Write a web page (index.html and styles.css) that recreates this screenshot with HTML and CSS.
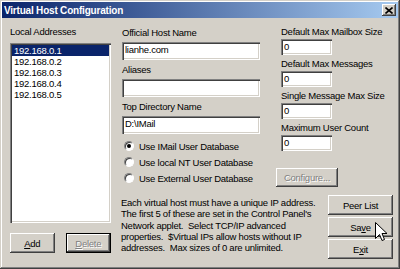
FILE: index.html
```html
<!DOCTYPE html>
<html lang="en">
<head>
    <meta charset="UTF-8">
    <title>Virtual Host Configuration</title>
    <link rel="stylesheet" href="styles.css">
</head>
<body>
    <div class="window">
        <div class="titlebar">
            <span class="title">Virtual Host Configuration</span>
            <span class="close-btn">
                <svg width="8" height="7" viewBox="0 0 8 7">
                    <path d="M0.5 0.5 L7.5 6.5 M7.5 0.5 L0.5 6.5" stroke="#000" stroke-width="1.6" fill="none"/>
                </svg>
            </span>
        </div>

        <div class="client">
            <!-- Coluna da lista de endereços -->
            <div class="col-left">
                <div class="label">Local Addresses</div>
                <ul class="listbox">
                    <li class="selected">192.168.0.1</li>
                    <li>192.168.0.2</li>
                    <li>192.168.0.3</li>
                    <li>192.168.0.4</li>
                    <li>192.168.0.5</li>
                </ul>
                <div class="list-buttons">
                    <div class="btn btn-add"><u>A</u>dd</div>
                    <div class="btn btn-delete default disabled"><span><u>D</u>elete</span></div>
                </div>
            </div>

            <div class="main">
                <div class="upper">
                    <div class="col-mid">
                        <div class="field">
                            <div class="label">Official Host Name</div>
                            <div class="textbox">lianhe.com</div>
                        </div>
                        <div class="field">
                            <div class="label">Aliases</div>
                            <div class="textbox"></div>
                        </div>
                        <div class="field">
                            <div class="label">Top Directory Name</div>
                            <div class="textbox">D:\IMail</div>
                        </div>
                        <div class="radios">
                            <div class="radio-row"><span class="radio checked"></span>Use IMail User Database</div>
                            <div class="radio-row"><span class="radio"></span>Use local NT User Database</div>
                            <div class="radio-row"><span class="radio"></span>Use External User Database</div>
                        </div>
                    </div>

                    <div class="col-right">
                        <div class="small-field">
                            <div class="label">Default Max Mailbox Size</div>
                            <div class="textbox small">0</div>
                        </div>
                        <div class="small-field">
                            <div class="label">Default Max Messages</div>
                            <div class="textbox small">0</div>
                        </div>
                        <div class="small-field">
                            <div class="label">Single Message Max Size</div>
                            <div class="textbox small">0</div>
                        </div>
                        <div class="small-field">
                            <div class="label">Maximum User Count</div>
                            <div class="textbox small">0</div>
                        </div>
                        <div class="btn btn-configure disabled">Configure...</div>
                    </div>
                </div>

                <div class="lower">
                    <p class="note">
                        Each virtual host must have a unique IP address.<br>
                        The first 5 of these are set in the Control Panel's<br>
                        Network applet.&nbsp; Select TCP/IP advanced<br>
                        properties.&nbsp; $Virtual IPs allow hosts without IP<br>
                        addresses.&nbsp; Max sizes of 0 are unlimited.
                    </p>
                    <div class="side-buttons">
                        <div class="btn btn-side">Peer List</div>
                        <div class="btn btn-side">Sa<u>v</u>e</div>
                        <div class="btn btn-side">E<u>x</u>it</div>
                    </div>
                </div>
            </div>
        </div>

        <!-- Cursor do mouse sobre o botão Save -->
        <svg class="cursor" width="13" height="20" viewBox="0 0 13 20">
            <path d="M0.5 0.5 L0.5 16.5 L4.5 12.5 L7 18.5 L9.5 17.5 L7 11.5 L12 11.5 Z" fill="#fff" stroke="#000" stroke-width="1"/>
        </svg>
    </div>
</body>
</html>
```

FILE: styles.css
```css
/* Estilo do corpo */
body {
    margin: 0;
    padding: 0;
    background-color: #d4d0c8;
    font-family: "Liberation Sans", Arial, sans-serif;
    font-size: 9.5px;
    letter-spacing: -0.25px;
    color: #000;
}

/* Janela principal */
.window {
    position: relative;
    width: 400px;
    height: 269px;
    box-sizing: border-box;
    padding: 2px;
    background-color: #d4d0c8;
    box-shadow: inset -1px -1px #404040, inset 1px 1px #d4d0c8,
                inset -2px -2px #808080, inset 2px 2px #fff;
}

/* Barra de título */
.titlebar {
    height: 16px;
    display: flex;
    align-items: center;
    justify-content: space-between;
    padding: 0 2px;
    background: linear-gradient(to right, #0a246a, #a6caf0);
}

.title {
    color: #fff;
    font-weight: bold;
    font-size: 10px;
    letter-spacing: -0.2px;
}

.close-btn {
    width: 14px;
    height: 12px;
    display: flex;
    align-items: center;
    justify-content: center;
    background-color: #d4d0c8;
    box-shadow: inset -1px -1px #404040, inset 1px 1px #fff,
                inset -2px -2px #808080;
}

/* Área do cliente */
.client {
    display: flex;
    padding: 8px 5px 0 8px;
}

.label {
    height: 12px;
    line-height: 12px;
    white-space: nowrap;
}

/* Coluna esquerda */
.col-left {
    width: 101px;
    flex-shrink: 0;
}

.listbox {
    list-style: none;
    margin: 5px 0 0 0;
    padding: 2px;
    height: 180px;
    box-sizing: border-box;
    background-color: #fff;
    box-shadow: inset 1px 1px #808080, inset 2px 2px #404040,
                inset -1px -1px #fff, inset -2px -2px #d4d0c8;
}

.listbox li {
    height: 11px;
    line-height: 11px;
    padding-left: 2px;
}

.listbox li.selected {
    background-color: #0a246a;
    color: #fff;
}

.list-buttons {
    display: flex;
    gap: 11px;
    margin-top: 10px;
}

/* Botões */
.btn {
    height: 20px;
    box-sizing: border-box;
    display: flex;
    align-items: center;
    justify-content: center;
    background-color: #d4d0c8;
    box-shadow: inset -1px -1px #404040, inset 1px 1px #fff,
                inset -2px -2px #808080, inset 2px 2px #d4d0c8;
}

.btn.default {
    border: 1px solid #000;
}

.btn.disabled {
    color: #808080;
    text-shadow: 1px 1px #fff;
}

.btn-add {
    width: 45px;
}

.btn-delete {
    width: 46px;
}

.btn-configure {
    width: 62px;
    height: 19px;
    margin: 17px 0 0 -5px;
}

/* Coluna principal */
.main {
    flex: 1;
    margin-left: 11px;
}

.upper {
    display: flex;
}

.col-mid {
    width: 138px;
    padding-top: 1px;
}

.field {
    margin-bottom: 4px;
}

.field .label {
    margin-bottom: 3px;
}

.textbox {
    height: 18px;
    line-height: 16px;
    box-sizing: border-box;
    padding-left: 3px;
    background-color: #fff;
    white-space: nowrap;
    box-shadow: inset 1px 1px #808080, inset 2px 2px #404040,
                inset -1px -1px #fff, inset -2px -2px #d4d0c8;
}

.textbox.small {
    width: 51px;
    height: 16px;
    line-height: 15px;
}

.radios {
    margin-top: 2px;
}

.radio-row {
    height: 16px;
    display: flex;
    align-items: center;
    white-space: nowrap;
}

.radio {
    position: relative;
    width: 10px;
    height: 10px;
    box-sizing: border-box;
    margin: 0 5px 0 2px;
    border-radius: 50%;
    background-color: #fff;
    border: 1px solid;
    border-color: #808080 #fff #fff #808080;
    box-shadow: inset 1px 1px #404040;
}

.radio.checked::after {
    content: "";
    position: absolute;
    left: 2px;
    top: 2px;
    width: 4px;
    height: 4px;
    border-radius: 50%;
    background-color: #000;
}

/* Coluna da direita */
.col-right {
    margin-left: 21px;
}

.small-field {
    margin-bottom: 3px;
}

.small-field .label {
    margin-bottom: 1px;
}

/* Parte inferior */
.lower {
    display: flex;
    justify-content: space-between;
    margin-top: 8px;
}

.note {
    margin: 2px 0 0 -1px;
    line-height: 11.3px;
    white-space: nowrap;
}

.side-buttons {
    display: flex;
    flex-direction: column;
    gap: 2px;
}

.btn-side {
    width: 65px;
}

/* Cursor */
.cursor {
    position: absolute;
    left: 375px;
    top: 222px;
}
```
